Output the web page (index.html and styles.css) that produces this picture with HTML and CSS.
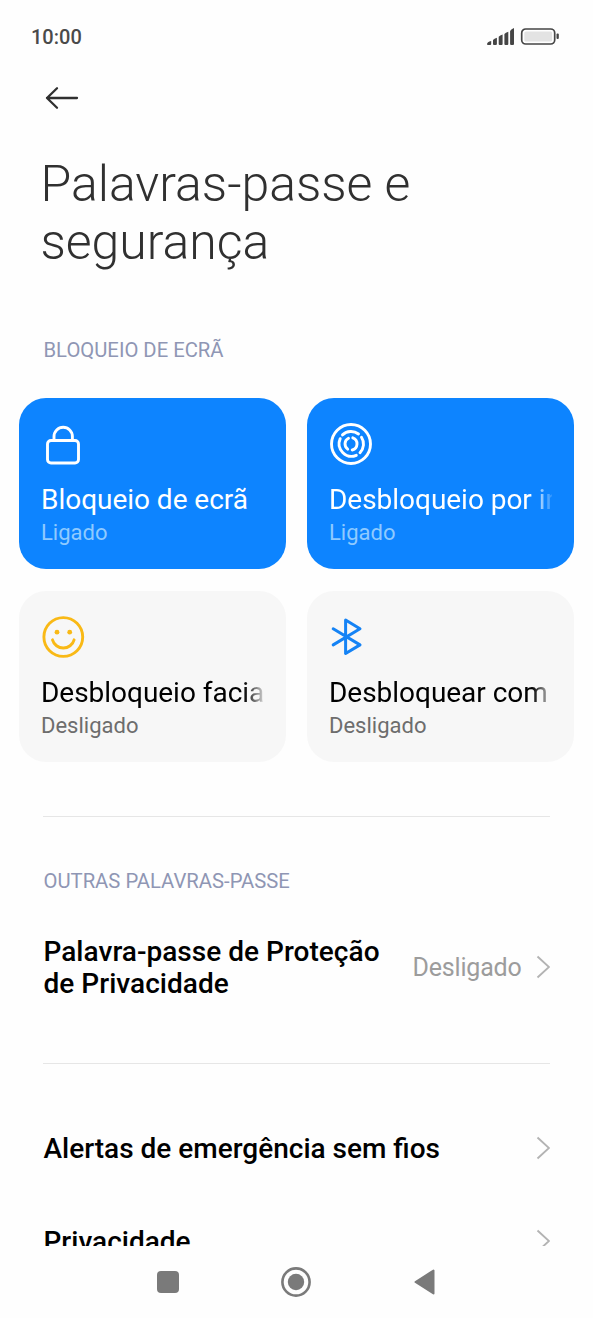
FILE: index.html
```html
<!DOCTYPE html>
<html lang="pt">
<head>
<meta charset="utf-8">
<title>Palavras-passe e segurança</title>
<link rel="stylesheet" href="styles.css">
</head>
<body>
<div class="screen">
  <header class="status">
    <span class="clock">10:00</span>
    <svg class="status-icons" width="74" height="20" viewBox="0 0 74 20">
      <path fill="#454545" d="M1 17.200q0-2.400 4.200-3.300V17q0 1-1 1H2q-1 0-1-.8zM7 13q1.200-1.600 3.900-2.300V17q0 1-1 1H8q-1 0-1-1zM12.700 9.700q1.200-1.600 3.900-2.300V17q0 1-1 1h-1.900q-1 0-1-1zM18.400 7q1.200-1.600 3.900-2.300V17q0 1-1 1h-1.900q-1 0-1-1zM24.100 4q1.200-2 3.900-3V17q0 1-1 1h-1.900q-1 0-1-1z"/>
      <rect x="70.500" y="6.500" width="2.300" height="5.500" rx="1" fill="#454545"/>
      <rect x="35.700" y="2" width="33" height="15" rx="4" fill="#fff" stroke="#454545" stroke-width="1.700"/>
      <rect x="38.300" y="4.500" width="27.800" height="10" rx="1.500" fill="#e3e3e3"/>
    </svg>
  </header>
  <nav class="topbar">
    <svg width="36" height="24" viewBox="0 0 36 24" fill="none" stroke="#303030" stroke-width="2.300" stroke-linecap="round" stroke-linejoin="round"><path d="M33 12H3M13 2.200L3 12l10 9.800"/></svg>
  </nav>
  <main class="content">
    <h1 class="title">Palavras-passe e segurança</h1>
    <h2 class="label">BLOQUEIO DE ECRÃ</h2>
    <section class="cards">
      <article class="card card-on">
        <svg class="icon" width="44" height="44" viewBox="0 0 44 44" fill="none" stroke="#fff" stroke-width="2.900"><rect x="6.500" y="18.500" width="31" height="22.500" rx="3.500"/><path d="M13 18.500v-4a9.200 9.200 0 0 1 18.400 0v4"/></svg>
        <h3 class="card-title">Bloqueio de ecrã</h3>
        <p class="card-state">Ligado</p>
      </article>
      <article class="card card-on">
        <svg class="icon" width="44" height="44" viewBox="0 0 44 44" fill="none" stroke="#fff" stroke-width="2.900" stroke-linecap="round"><circle cx="22" cy="22" r="19.500"/><path d="M13.500 12.900A12.500 12.500 0 0 1 29.500 12M32.500 15.200A12.500 12.500 0 0 1 31 30.700M27.300 33.300A12.500 12.500 0 0 1 11.200 16.700"/><path d="M19.500 16.300a6.300 6.300 0 0 0-.8 10.800M23.800 15.800a6.400 6.400 0 0 1-.6 12.200"/></svg>
        <h3 class="card-title card-title-fade">Desbloqueio por impressão digital</h3>
        <p class="card-state">Ligado</p>
      </article>
      <article class="card">
        <svg class="icon" width="44" height="44" viewBox="0 0 44 44" fill="none" stroke="#f9b916" stroke-width="2.900" stroke-linecap="round"><circle cx="22.300" cy="22" r="19.400"/><path d="M11.500 24.800a11.200 11.200 0 0 0 21.600 0"/><g fill="#f9b916" stroke="none"><circle cx="16" cy="17.200" r="2.400"/><circle cx="28.700" cy="17.200" r="2.400"/></g></svg>
        <h3 class="card-title card-title-fade">Desbloqueio facial</h3>
        <p class="card-state">Desligado</p>
      </article>
      <article class="card">
        <svg class="icon" width="44" height="44" viewBox="0 0 44 44" fill="none" stroke="#1583f5" stroke-width="3" stroke-linecap="round" stroke-linejoin="round"><path d="M4.200 13.800L31 29.900 16.600 38.500V5L31 13.800 4.200 29.900"/></svg>
        <h3 class="card-title card-title-fade">Desbloquear com</h3>
        <p class="card-state">Desligado</p>
      </article>
    </section>
    <hr class="rule">
    <h2 class="label label-other">OUTRAS PALAVRAS-PASSE</h2>
    <section class="row row-tall">
      <span class="row-title">Palavra-passe de Proteção<br>de Privacidade</span>
      <span class="row-value">Desligado</span>
      <svg class="chevron" width="14" height="24" viewBox="0 0 14 24"><path d="M1.500 1.500L13 12 1.500 22.500"/></svg>
    </section>
    <hr class="rule">
    <section class="row row-first">
      <span class="row-title">Alertas de emergência sem fios</span>
      <svg class="chevron" width="14" height="24" viewBox="0 0 14 24"><path d="M1.500 1.500L13 12 1.500 22.500"/></svg>
    </section>
    <section class="row">
      <span class="row-title">Privacidade</span>
      <svg class="chevron" width="14" height="24" viewBox="0 0 14 24"><path d="M1.500 1.500L13 12 1.500 22.500"/></svg>
    </section>
  </main>
  <footer class="navbar">
    <svg width="22" height="22" viewBox="0 0 22 22"><rect width="22" height="22" rx="4" fill="#7a7a7a"/></svg>
    <svg width="30" height="30" viewBox="0 0 30 30"><circle cx="15" cy="15" r="13.600" fill="none" stroke="#7a7a7a" stroke-width="2.600"/><circle cx="15" cy="15" r="8.200" fill="#7a7a7a"/></svg>
    <svg width="21" height="26" viewBox="0 0 21 26"><path d="M19.500 1.500v23L1.500 13z" fill="#7a7a7a" stroke="#7a7a7a" stroke-width="2" stroke-linejoin="round"/></svg>
  </footer>
</div>
</body>
</html>
```
FILE: styles.css
```css
* { box-sizing: border-box; margin: 0; padding: 0; }
body { background: #fefefe; font-family: Roboto, sans-serif; color: #000; }
svg { display: block; flex: none; }
.screen { width: 593px; height: 1318px; display: flex; flex-direction: column; overflow: hidden; }
.status { height: 74px; padding: 0 33px 0 31px; display: flex; align-items: center; justify-content: space-between; flex: none; }
.clock { font-size: 20px; font-weight: 500; color: #4a4a4a; }
.topbar { height: 81px; padding: 12px 0 0 44px; flex: none; }
.content { height: 1091px; overflow: hidden; flex: none; }
.title { height: 183px; padding-left: 40.500px; width: 440px; font-size: 50px; font-weight: 300; line-height: 58px; letter-spacing: -0.05px; color: #303030; }
.label { height: 60px; padding-left: 43.500px; font-size: 20.250px; font-weight: 400; line-height: 24px; color: #8f96b4; }
.cards { display: grid; grid-template-columns: 266.500px 267px; grid-auto-rows: 171.200px; gap: 21.600px 21.500px; padding: 0 19px; }
.card { border-radius: 27px; background: #f7f7f7; padding: 24px 22px 0; overflow: hidden; }
.card-on { background: #0d84ff; color: #fff; }
.card-title { margin-top: 17px; height: 34px; font-size: 28px; font-weight: 400; line-height: 34px; letter-spacing: -0.03px; white-space: nowrap; overflow: hidden; }
.card-title-fade { -webkit-mask-image: linear-gradient(90deg, #000 203px, transparent 226px); mask-image: linear-gradient(90deg, #000 203px, transparent 226px); }
.card-state { font-size: 22px; line-height: 28px; color: #6d6d6d; margin-top: 2px; }
.card-on .card-state { color: #8fcaff; }
.rule { border: 0; height: 1px; background: #e6e6e6; margin: 54px 43.500px 0 43px; }
.label-other { height: 60px; margin-top: 52px; }
.row { height: 92.500px; padding: 0 43.500px; display: flex; align-items: center; }
.row-tall { height: 78px; }
.row-tall + .rule { margin-top: 56px; }
.row-first { margin-top: 39px; }
.row-title { flex: 1; font-size: 28px; font-weight: 500; line-height: 32px; }
.row-tall .row-title { letter-spacing: 0.03px; }
.row-value { font-size: 25px; color: #9c9c9c; margin-right: 14px; letter-spacing: -0.2px; }
.chevron { fill: none; stroke: #b3b3b3; stroke-width: 1.9px; margin-bottom: 2px; }
.navbar { height: 72px; padding-right: 1px; display: grid; grid-template-columns: repeat(3, 128px); justify-content: center; justify-items: center; align-items: center; }
```
